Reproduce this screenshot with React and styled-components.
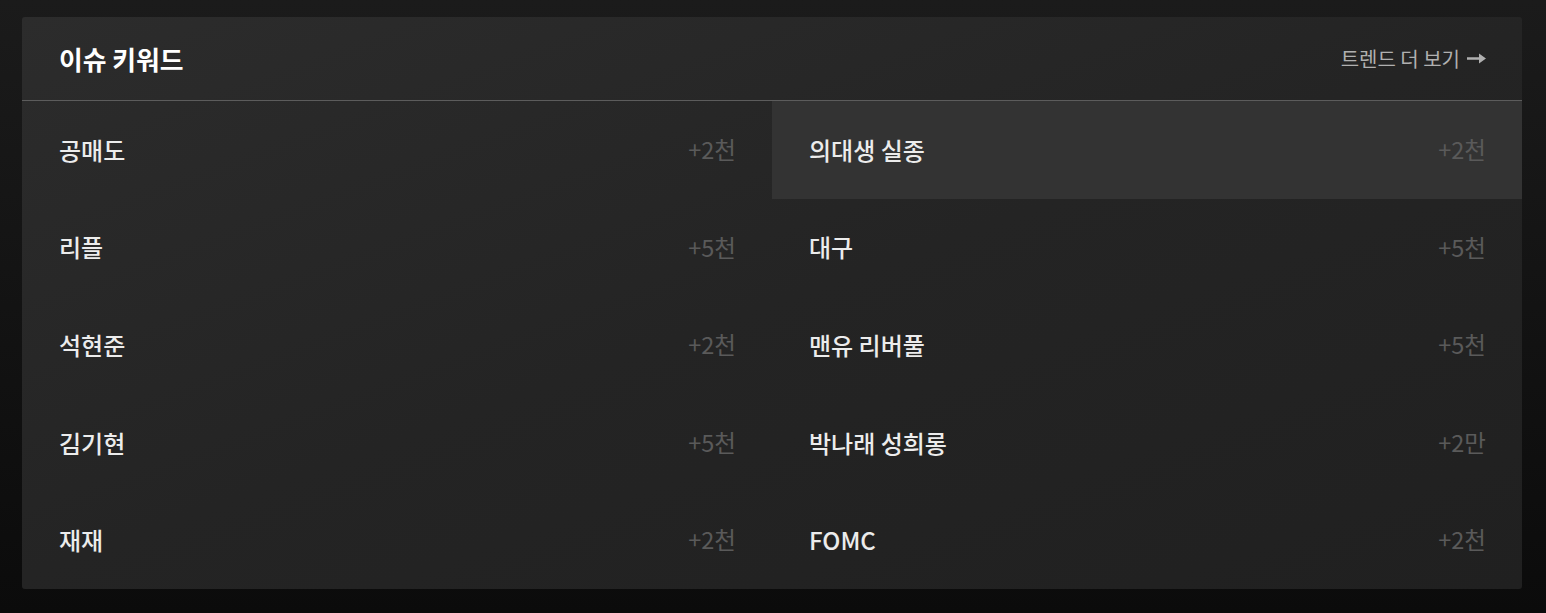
import React from "react";
import styled, { createGlobalStyle } from "styled-components";

const Global = createGlobalStyle`
  html, body { margin: 0; padding: 0; }
  body {
    background: linear-gradient(180deg, #1b1b1b 0%, #0b0b0b 100%);
    min-height: 613px;
    font-family: "Noto Sans CJK KR", "Noto Sans", sans-serif;
  }
`;

const Page = styled.div`
  padding: 17px 24px 24px 22px;
`;

const Card = styled.section`
  background: linear-gradient(160deg, #2c2c2c 0%, #242424 50%, #202020 100%);
  border-radius: 3px;
  overflow: hidden;
`;

const Header = styled.header`
  height: 83px;
  display: flex;
  align-items: center;
  justify-content: space-between;
  padding: 0 36px 0 37px;
  border-bottom: 1px solid #5c5c5c;
`;

const Title = styled.h2`
  margin: 0;
  font-size: 25.8px;
  font-weight: 700;
  color: #ffffff;
  line-height: 1;
`;

const More = styled.a`
  font-size: 20px;
  color: #b0b0b0;
  text-decoration: none;
  display: flex;
  align-items: center;
  gap: 7px;
  line-height: 1;
`;

const Grid = styled.div`
  display: grid;
  grid-template-columns: 1fr 1fr;
  grid-auto-flow: column;
  grid-template-rows: repeat(5, 97.6px);
`;

const Row = styled.div`
  display: flex;
  align-items: center;
  justify-content: space-between;
  padding: 0 36px 0 37px;
  background: ${(p) => (p.$active ? "#333333" : "transparent")};
`;

const Keyword = styled.span`
  font-size: 24px;
  font-weight: 500;
  color: #ececec;
  line-height: 1;
`;

const Count = styled.span`
  font-size: 23.5px;
  font-weight: 400;
  color: #5a5a5a;
  line-height: 1;
`;

const left = [
  ["공매도", "+2천"],
  ["리플", "+5천"],
  ["석현준", "+2천"],
  ["김기현", "+5천"],
  ["재재", "+2천"],
];
const right = [
  ["의대생 실종", "+2천"],
  ["대구", "+5천"],
  ["맨유 리버풀", "+5천"],
  ["박나래 성희롱", "+2만"],
  ["FOMC", "+2천"],
];

export default function App() {
  const items = [...left, ...right];
  return (
    <>
      <Global />
      <Page>
        <Card>
          <Header>
            <Title>이슈 키워드</Title>
            <More href="#">
              트렌드 더 보기
              <svg width="19" height="11" viewBox="0 0 19 11">
                <path d="M0 4.2h12V0.5L19 5.5 12 10.5V6.8H0z" fill="#b0b0b0" />
              </svg>
            </More>
          </Header>
          <Grid>
            {items.map(([k, c], i) => (
              <Row key={k} $active={i === 5}>
                <Keyword>{k}</Keyword>
                <Count>{c}</Count>
              </Row>
            ))}
          </Grid>
        </Card>
      </Page>
    </>
  );
}
